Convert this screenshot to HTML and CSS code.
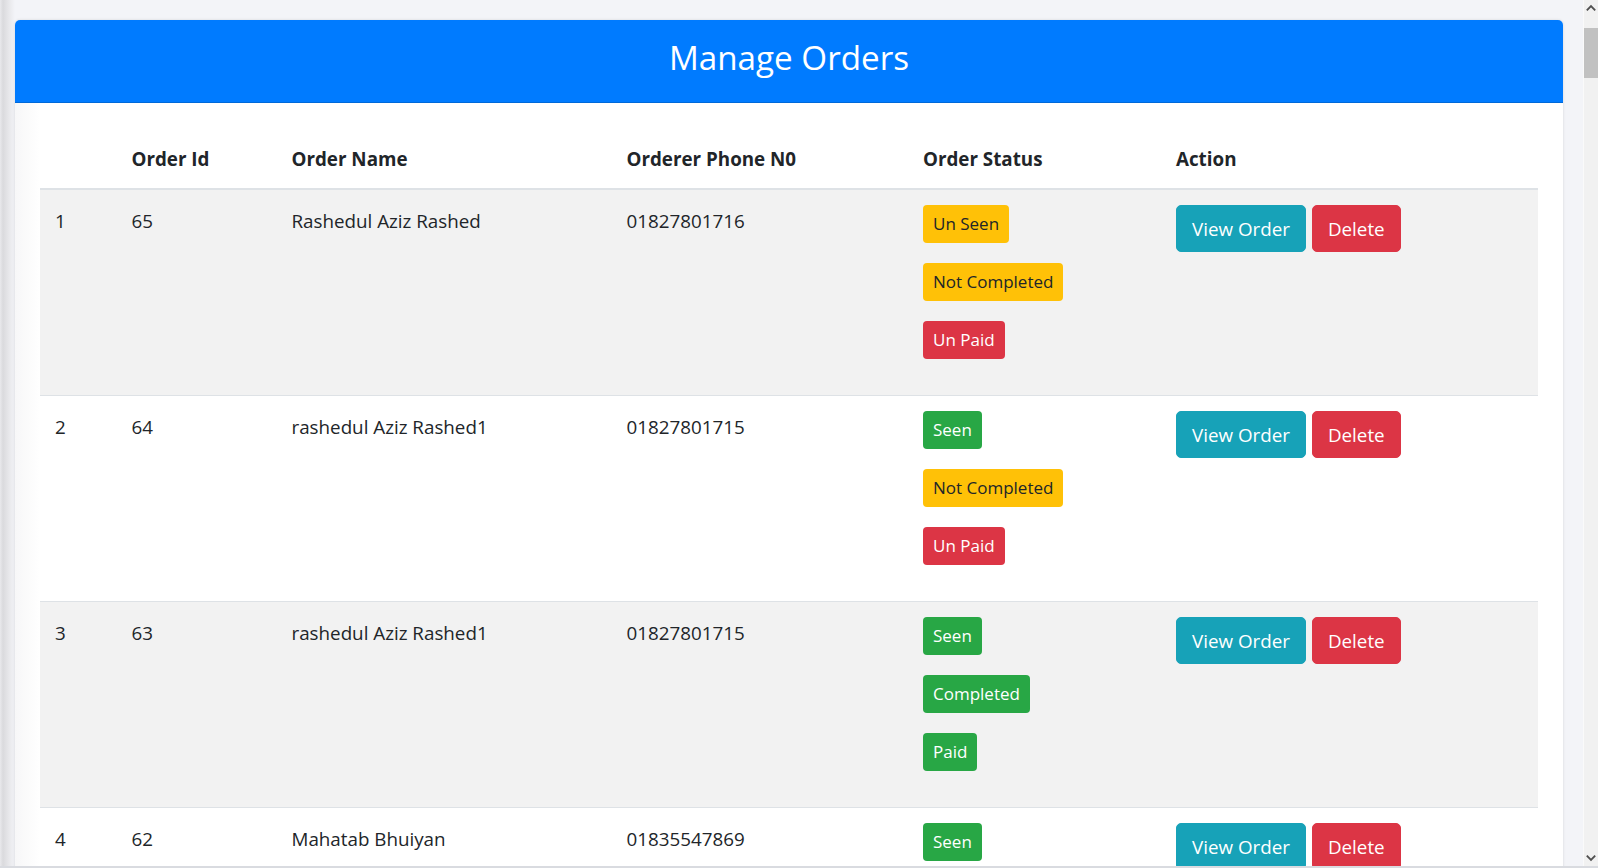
FILE: index.html
```html
<!DOCTYPE html>
<html lang="en">
<head>
<meta charset="utf-8">
<title>Manage Orders</title>
<link rel="stylesheet" href="styles.css">
</head>
<body>
<div class="screen">
  <div class="page">
    <div class="card">
      <div class="card-header"><h2 class="title">Manage Orders</h2></div>
      <div class="card-body">
        <table class="orders">
          <colgroup>
            <col class="c-num"><col class="c-id"><col class="c-name"><col class="c-phone"><col class="c-status"><col class="c-action">
          </colgroup>
          <thead>
            <tr><th></th><th>Order Id</th><th>Order Name</th><th>Orderer Phone N0</th><th>Order Status</th><th>Action</th></tr>
          </thead>
          <tbody>
            <tr>
              <td>1</td><td>65</td><td>Rashedul Aziz Rashed</td><td>01827801716</td>
              <td><span class="badge warning">Un Seen</span><span class="badge warning">Not Completed</span><span class="badge danger">Un Paid</span></td>
              <td><div class="actions"><button class="btn info">View Order</button><button class="btn danger">Delete</button></div></td>
            </tr>
            <tr>
              <td>2</td><td>64</td><td>rashedul Aziz Rashed1</td><td>01827801715</td>
              <td><span class="badge success">Seen</span><span class="badge warning">Not Completed</span><span class="badge danger">Un Paid</span></td>
              <td><div class="actions"><button class="btn info">View Order</button><button class="btn danger">Delete</button></div></td>
            </tr>
            <tr>
              <td>3</td><td>63</td><td>rashedul Aziz Rashed1</td><td>01827801715</td>
              <td><span class="badge success">Seen</span><span class="badge success">Completed</span><span class="badge success">Paid</span></td>
              <td><div class="actions"><button class="btn info">View Order</button><button class="btn danger">Delete</button></div></td>
            </tr>
            <tr>
              <td>4</td><td>62</td><td>Mahatab Bhuiyan</td><td>01835547869</td>
              <td><span class="badge success">Seen</span></td>
              <td><div class="actions"><button class="btn info">View Order</button><button class="btn danger">Delete</button></div></td>
            </tr>
          </tbody>
        </table>
      </div>
    </div>
  </div>
  <div class="scrollbar">
    <div class="sb-arrow"><svg width="15" height="17" viewBox="0 0 15 17"><polyline points="3,10.5 7.5,6 12,10.5" fill="none" stroke="#505050" stroke-width="2"/></svg></div>
    <div class="sb-gap"></div>
    <div class="sb-thumb"></div>
    <div class="sb-track"></div>
    <div class="sb-arrow"><svg width="15" height="17" viewBox="0 0 15 17"><polyline points="3,6.5 7.5,11 12,6.5" fill="none" stroke="#505050" stroke-width="2"/></svg></div>
  </div>
</div>
<div class="bottom-edge"></div>
</body>
</html>
```
FILE: styles.css
```css
* { box-sizing: border-box; }
html, body { margin: 0; padding: 0; }
body {
  font-family: "Open Sans", "Noto Sans", sans-serif;
  color: #212529;
  background: #f3f4f8;
  overflow: hidden;
}
.screen {
  display: flex;
  height: 866px;
}
.page {
  flex: 1;
  overflow: hidden;
  padding: 20px 20px 0 15px;
  background: linear-gradient(to right, #e9e9ec 0, #dadadd 3px, #e8e8eb 9px, #f3f4f8 15px, #f3f4f8 100%);
}
.card {
  background: #fff;
  border-radius: 5px 5px 0 0;
  box-shadow: 0 0 3px rgba(0,0,0,0.12);
  min-height: 900px;
}
.card-header {
  height: 83px;
  background: #007bff;
  border-bottom: 1px solid #0069d9;
  border-radius: 5px 5px 0 0;
  display: flex;
  align-items: center;
  justify-content: center;
  padding-bottom: 7px;
}
.title {
  margin: 0;
  color: #fff;
  font-weight: 400;
  font-size: 33.2px;
  line-height: 44px;
}
.card-body {
  padding: 25px;
  background: linear-gradient(to right, #f7f7f8 0, #ffffff 25px);
}
.orders {
  width: 100%;
  border-collapse: collapse;
  table-layout: fixed;
  font-size: 18.8px;
}
.c-num { width: 76.5px; }
.c-id { width: 160px; }
.c-name { width: 335px; }
.c-phone { width: 296.5px; }
.c-status { width: 253px; }
.c-action { width: 377px; }
.orders th {
  text-align: left;
  font-weight: 700;
  padding: 16px 15px 14px;
  line-height: 30px;
  border-bottom: 2px solid #dee2e6;
  white-space: nowrap;
}
.orders td {
  padding: 15px 15px 16px;
  line-height: 30px;
  vertical-align: top;
  border-top: 1px solid #dee2e6;
  white-space: nowrap;
}
.orders td:nth-child(-n+4) { padding-top: 16px; }
.orders tbody tr:nth-child(odd) { background: #f2f2f2; }
.badge {
  display: block;
  width: max-content;
  padding: 10px;
  font-size: 17px;
  line-height: 18px;
  border-radius: 4px;
  margin-bottom: 20px;
}
.warning { background: #ffc107; color: #212529; }
.danger { background: #dc3545; color: #fff; }
.success { background: #28a745; color: #fff; }
.info { background: #17a2b8; color: #fff; }
.actions {
  display: flex;
  gap: 6px;
}
.btn {
  font-family: inherit;
  font-size: 18.8px;
  line-height: 30px;
  padding: 7.5px 15px;
  border: 1px solid transparent;
  border-radius: 5px;
  cursor: pointer;
}
.btn.info { border-color: #17a2b8; }
.btn.danger { border-color: #dc3545; }
.scrollbar {
  width: 15px;
  background: #f1f1f1;
  border-left: 1px solid #fafafa;
  display: flex;
  flex-direction: column;
}
.sb-arrow { height: 17px; display: flex; justify-content: center; }
.sb-arrow svg { display: block; }
.sb-gap { height: 11px; }
.sb-thumb { height: 50px; background: #c1c1c1; }
.sb-track { flex: 1; }
.bottom-edge { height: 2px; background: #d9dbe0; }
```
